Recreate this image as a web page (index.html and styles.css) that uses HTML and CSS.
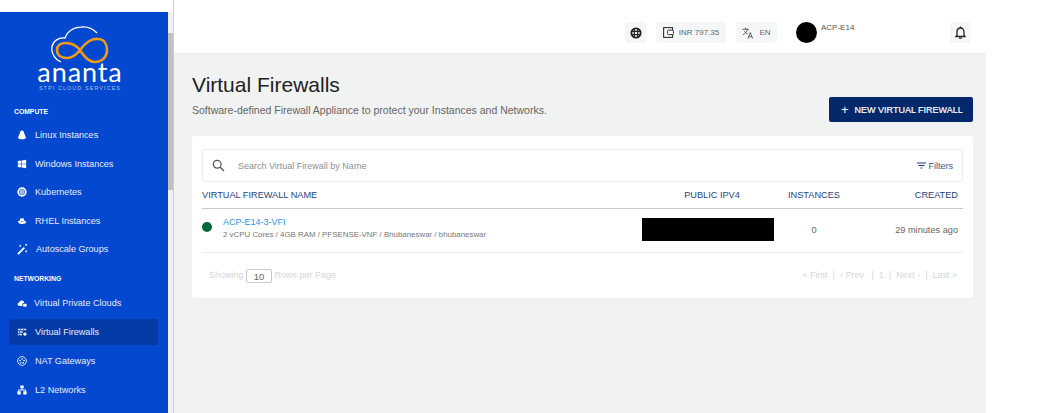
FILE: index.html
```html
<!DOCTYPE html>
<html>
<head>
    <title>Virtual Firewalls</title>
    <link rel="stylesheet" href="styles.css">
</head>
<body>
    <div class="app">
        <aside class="sidebar-wrap">
            <div class="sidebar">
                <div class="logo">
                    <svg class="logo-mark" width="60" height="38" viewBox="0 0 60 38">
                        <path d="M10 36 C3 33 0 26 1 21 C2 15 8 11 14 12 C17 4 24 1 30 1 C37 0 42 3 46 7" fill="none" stroke="#fff" stroke-width="1.3"/>
                        <path d="M29 24 C34 17 41 12 47 13 C53 13 56 18 56 24 C56 31 51 36 44 36 C37 36 32 29 29 24 C25 19 21 17 15 17 C9 17 6 20 6 24 C6 29 10 32 16 32 C22 32 26 28 29 24" fill="none" stroke="#f39a15" stroke-width="2.6"/>
                    </svg>
                    <div class="logo-name">ananta</div>
                    <div class="logo-tag">STPI CLOUD SERVICES</div>
                </div>
                <div class="nav-label">COMPUTE</div>
                <nav class="nav-group">
                    <a class="nav-item">
                        <svg class="nav-icon" viewBox="0 0 12 12"><path d="M6 0.5 C8 0.5 8.6 2.5 8.6 4 L11 9.5 L8 11 L4 11 L1 9.5 L3.4 4 C3.4 2.5 4 0.5 6 0.5Z" fill="#fff"/></svg>
                        Linux Instances
                    </a>
                    <a class="nav-item">
                        <svg class="nav-icon" viewBox="0 0 12 12"><path d="M1 2.5 L5.3 1.8 V5.6 H1Z M6 1.7 L11 1 V5.6 H6Z M1 6.3 H5.3 V10.2 L1 9.5Z M6 6.3 H11 V11 L6 10.3Z" fill="#fff"/></svg>
                        Windows Instances
                    </a>
                    <a class="nav-item">
                        <svg class="nav-icon" viewBox="0 0 12 12"><circle cx="6" cy="6" r="4.6" fill="none" stroke="#fff" stroke-width="2"/><circle cx="6" cy="6" r="3.2" fill="#9db6ee"/></svg>
                        Kubernetes
                    </a>
                    <a class="nav-item">
                        <svg class="nav-icon" viewBox="0 0 12 12"><path d="M3.5 5 C3.7 3 4.6 2.5 6 3 C7.6 2.5 8.3 3 8.6 5 L8.8 6 L3.2 6Z M1.2 6.2 L3 5.8 C4 7 8 7 9 5.8 L11 7 C11 9 8.5 9.8 6 9.6 C3 9.4 1 8 1.2 6.2Z" fill="#fff"/></svg>
                        RHEL Instances
                    </a>
                    <a class="nav-item nav-item-wide">
                        <svg class="nav-icon nav-icon-big" viewBox="0 0 12 12"><path d="M1 11 L8 4" stroke="#fff" stroke-width="2"/><path d="M9 1 L11 1 M10 0 L10 2 M2.5 2 L4.5 2 M3.5 1 L3.5 3 M10 7 L10 9 M9 8 L11 8" stroke="#fff" stroke-width="1"/></svg>
                        Autoscale Groups
                    </a>
                </nav>
                <div class="nav-label nav-label-net">NETWORKING</div>
                <nav class="nav-group nav-group-net">
                    <a class="nav-item nav-item-tight">
                        <svg class="nav-icon" viewBox="0 0 12 12"><path d="M3 9.5 C1 9.5 0.5 8 0.8 7 C1 6 2 5.5 2.6 5.6 C3 3.5 5 2.5 6.5 3 C8 3.5 8.6 4.6 8.6 5.8 L6.5 6.5 V9.5Z" fill="#fff"/><rect x="7.5" y="7" width="4" height="3.4" rx="0.5" fill="#fff"/></svg>
                        Virtual Private Clouds
                    </a>
                    <a class="nav-item active">
                        <svg class="nav-icon" viewBox="0 0 12 12"><path d="M1 2 H11 V4 H1Z M1 5 H7 V7 H1Z M1 8 H6 V10 H1Z" fill="#dce5f8"/><path d="M4 2 V4 M8 2 V4 M3 5 V7 M2.5 8 V10" stroke="#0a3ba6" stroke-width="0.7"/><circle cx="9.5" cy="8.5" r="2" fill="#fff"/></svg>
                        Virtual Firewalls
                    </a>
                    <a class="nav-item">
                        <svg class="nav-icon" viewBox="0 0 12 12"><circle cx="6" cy="6" r="5.2" fill="none" stroke="#fff" stroke-width="1"/><circle cx="6" cy="3.6" r="1" fill="#fff"/><circle cx="3.6" cy="5.4" r="1" fill="#fff"/><circle cx="8.4" cy="5.4" r="1" fill="#fff"/><circle cx="4.5" cy="8.2" r="1" fill="#fff"/><circle cx="7.5" cy="8.2" r="1" fill="#fff"/></svg>
                        NAT Gateways
                    </a>
                    <a class="nav-item">
                        <svg class="nav-icon" viewBox="0 0 12 12"><path d="M4 0.5 H8 V4 H6.5 V5.5 H10.5 V7.5 H11.5 V11.5 H7.5 V7.5 H9.5 V6.5 H2.5 V7.5 H4.5 V11.5 H0.5 V7.5 H1.5 V5.5 H5.5 V4 H4Z" fill="#fff"/></svg>
                        L2 Networks
                    </a>
                </nav>
            </div>
            <div class="scrollbar"><div class="scroll-thumb"></div></div>
        </aside>

        <div class="main">
            <header class="topbar">
                <div class="chip chip-icon">
                    <svg width="12" height="12" viewBox="0 0 13 13"><circle cx="6.5" cy="6.5" r="5" fill="none" stroke="#222" stroke-width="2"/><path d="M4.7 1 V12 M8.3 1 V12 M1 4.7 H12 M1 8.3 H12" stroke="#222" stroke-width="1.3"/></svg>
                </div>
                <div class="chip chip-wallet">
                    <svg width="11" height="11" viewBox="0 0 11 11"><rect x="0.6" y="0.6" width="9" height="9.8" fill="none" stroke="#333" stroke-width="1.1"/><rect x="4.6" y="3.2" width="5.8" height="4.4" rx="1" fill="#fff" stroke="#333" stroke-width="1"/></svg>
                    <span>INR 797.35</span>
                </div>
                <div class="chip chip-lang">
                    <svg width="12" height="12" viewBox="0 0 13 13"><path d="M0.5 2.5 H7.5 M4 0.5 V2.5 M6 2.5 C5 5.5 3 7.5 1 8.5 M2.5 4.5 C3.5 6 4.5 7 6 7.5" fill="none" stroke="#444" stroke-width="0.9"/><path d="M6.5 12.5 L9 6 L11.5 12.5 M7.4 10.5 H10.6" fill="none" stroke="#444" stroke-width="0.9"/></svg>
                    <span>EN</span>
                </div>
                <div class="user">
                    <div class="avatar"></div>
                    <div class="user-name">ACP-E14</div>
                </div>
                <div class="chip chip-bell">
                    <svg width="13" height="14" viewBox="0 0 13 14"><path d="M2 10.5 H11 L10 9 V6 C10 3.5 8.5 2 6.5 2 C4.5 2 3 3.5 3 6 V9Z" fill="none" stroke="#222" stroke-width="1.3"/><path d="M6.5 0.5 V2 M5 12.2 H8" stroke="#222" stroke-width="1.3"/></svg>
                </div>
            </header>

            <main class="content">
                <div class="page-head">
                    <div class="page-text">
                        <h1 class="page-title">Virtual Firewalls</h1>
                        <p class="page-sub">Software-defined Firewall Appliance to protect your Instances and Networks.</p>
                    </div>
                    <button class="btn-new"><span class="plus">+</span>NEW VIRTUAL FIREWALL</button>
                </div>

                <section class="card">
                    <div class="search">
                        <svg width="13" height="13" viewBox="0 0 13 13"><circle cx="5.2" cy="5.2" r="3.9" fill="none" stroke="#555" stroke-width="1.2"/><path d="M8.2 8.2 L12 12" stroke="#555" stroke-width="1.3"/></svg>
                        <span class="search-text">Search Virtual Firewall by Name</span>
                        <span class="filters">
                            <svg width="9" height="7" viewBox="0 0 9 7"><path d="M0 1 H9 M1.5 3.5 H7.5 M3.5 6 H5.5" stroke="#1d3b78" stroke-width="1"/></svg>
                            Filters
                        </span>
                    </div>

                    <div class="row row-head">
                        <div>VIRTUAL FIREWALL NAME</div>
                        <div class="cell-ip">PUBLIC IPV4</div>
                        <div class="cell-inst">INSTANCES</div>
                        <div class="cell-created">CREATED</div>
                    </div>

                    <div class="row row-body">
                        <div class="cell-name">
                            <span class="status"></span>
                            <div class="fw-text">
                                <div class="fw-name">ACP-E14-3-VFI</div>
                                <div class="fw-meta">2 vCPU Cores / 4GB RAM / PFSENSE-VNF / Bhubaneswar / bhubaneswar</div>
                            </div>
                        </div>
                        <div class="cell-ip"><div class="redacted"></div></div>
                        <div class="cell-inst">0</div>
                        <div class="cell-created">29 minutes ago</div>
                    </div>

                    <div class="pager">
                        <div class="pager-size">Showing <span class="size-box">10</span> Rows per Page</div>
                        <div class="pager-links">« First &nbsp;|&nbsp; ‹ Prev &nbsp; | &nbsp;1&nbsp; | &nbsp;Next › &nbsp;| &nbsp;Last »</div>
                    </div>
                </section>
            </main>
        </div>
    </div>
</body>
</html>
```

FILE: styles.css
```css
* {
    box-sizing: border-box;
}

html, body {
    height: 413px;
    overflow: hidden;
}

body {
    margin: 0;
    background: #fff;
    font-family: "Liberation Sans", Arial, sans-serif;
    color: #333;
}

.app {
    display: flex;
    width: 986px;
    height: 413px;
}

.sidebar-wrap {
    display: flex;
    flex: 0 0 174px;
    padding-top: 12px;
    border-right: 1px solid #c5cbea;
}

.sidebar {
    flex: 0 0 168px;
    padding: 14px 10px 0 9px;
    background: #0348cf;
    color: #fff;
    overflow: hidden;
}

.scrollbar {
    flex: 1;
    background: #f1f1f1;
}

.scroll-thumb {
    height: 157px;
    margin-top: 21px;
    background: #c1c1c1;
}

.logo {
    display: flex;
    flex-direction: column;
    align-items: center;
    height: 78px;
    margin-right: 7px;
}

.logo-mark {
    margin-left: 2px;
    flex: 0 0 38px;
}

.logo-name {
    margin-top: -3px;
    font-family: Lato, sans-serif;
    font-size: 27px;
    font-weight: 400;
    line-height: 21px;
    letter-spacing: 0.9px;
}

.logo-tag {
    margin-top: 3px;
    font-size: 5.5px;
    line-height: 7px;
    letter-spacing: 1.05px;
    color: #a9bff0;
}

.nav-label {
    margin-left: 5px;
    height: 14px;
    font-size: 6.8px;
    font-weight: bold;
    line-height: 16px;
}

.nav-label-net {
    margin-top: 9px;
}

.nav-group {
    display: flex;
    flex-direction: column;
    gap: 2.5px;
    margin-top: 4px;
}

.nav-group-net {
    gap: 3px;
    margin-top: 5px;
}

.nav-item {
    display: flex;
    align-items: center;
    gap: 8px;
    height: 26px;
    padding-left: 8px;
    border-radius: 3px;
    font-size: 9.1px;
    color: #e6ecfb;
}

.nav-item.active {
    background: #033aa6;
}

.nav-icon {
    flex: 0 0 10px;
    width: 10px;
    height: 10px;
}

.nav-icon-big {
    flex: 0 0 11px;
    width: 11px;
    height: 11px;
}

.nav-item-tight {
    gap: 7px;
}

.main {
    flex: 1;
    display: flex;
    flex-direction: column;
    min-width: 0;
}

.topbar {
    display: flex;
    align-items: center;
    flex: 0 0 54px;
    padding: 22px 15px 10px 451px;
    border-bottom: 1px solid #e8e9e9;
    background: #fff;
}

.chip {
    display: flex;
    align-items: center;
    justify-content: center;
    height: 21px;
    border-radius: 3px;
    background: #f5f6f7;
    font-size: 8px;
    color: #666;
}

.chip-icon {
    width: 21px;
}

.chip-wallet {
    width: 70px;
    gap: 5px;
    margin-left: 10px;
}

.chip-lang {
    width: 41px;
    gap: 5px;
    margin-left: 10px;
}

.user {
    display: flex;
    width: 154px;
    margin-left: 19px;
}

.avatar {
    width: 21px;
    height: 21px;
    border-radius: 50%;
    background: #000;
}

.user-name {
    margin: 1px 0 0 4px;
    font-size: 8px;
    line-height: 9px;
    color: #555;
}

.chip-bell {
    width: 21px;
}

.content {
    flex: 1;
    padding: 19px 13px 0 18px;
    background: #f1f2f2;
}

.page-head {
    display: flex;
    justify-content: space-between;
    align-items: flex-end;
    height: 49px;
}

.page-text {
    align-self: flex-start;
}

.page-title {
    margin: 0;
    font-size: 21px;
    font-weight: normal;
    line-height: 24px;
    color: #222;
}

.page-sub {
    margin: 6px 0 0;
    font-size: 10.5px;
    line-height: 14px;
    color: #666;
}

.btn-new {
    display: flex;
    align-items: center;
    width: 144px;
    height: 25px;
    padding: 0 0 0 12px;
    border: 0;
    border-radius: 2px;
    background: #04296b;
    color: #fff;
    font-family: inherit;
    font-size: 9px;
    font-weight: normal;
    white-space: nowrap;
    -webkit-text-stroke: 0.2px #fff;
}

.plus {
    margin-right: 6px;
    font-size: 13px;
    line-height: 13px;
    -webkit-text-stroke: 0;
}

.card {
    height: 162px;
    margin-top: 14px;
    padding: 13px 10px 0;
    border-radius: 3px;
    background: #fff;
}

.search {
    display: flex;
    align-items: center;
    height: 33px;
    padding: 0 9px;
    border: 1px solid #eceded;
    border-radius: 2px;
    font-size: 9px;
}

.search-text {
    flex: 1;
    margin-left: 13px;
    color: #8b8f94;
}

.filters {
    display: flex;
    align-items: center;
    gap: 3px;
    color: #3e5688;
}

.row {
    display: grid;
    grid-template-columns: 440px 132px 80px 1fr;
    align-items: center;
}

.row-head {
    height: 27px;
    border-bottom: 1px solid #c8c9c9;
    font-size: 9.2px;
    color: #27457f;
}

.row-body {
    height: 44px;
    border-bottom: 1px solid #eceded;
    font-size: 9.2px;
    color: #666;
}

.cell-ip {
    text-align: center;
}

.row-head .cell-ip {
    padding-left: 8px;
}

.cell-inst {
    text-align: center;
}

.cell-created {
    padding-right: 5px;
    text-align: right;
}

.row-body .cell-inst,
.row-body .cell-created {
    margin-bottom: 2px;
}

.cell-name {
    display: flex;
    align-items: center;
    gap: 11px;
}

.status {
    flex: 0 0 10px;
    height: 10px;
    margin-top: -8px;
    border-radius: 50%;
    background: #03693a;
}

.fw-text {
    margin-top: -5px;
}

.fw-name {
    font-size: 9px;
    line-height: 13px;
    color: #2a96e8;
}

.fw-meta {
    font-size: 7.9px;
    line-height: 11px;
    color: #777;
}

.redacted {
    width: 132px;
    height: 23px;
    margin-bottom: 3px;
    background: #000;
}

.pager {
    display: flex;
    justify-content: space-between;
    align-items: center;
    height: 44px;
    padding: 0 6px 0 7px;
    font-size: 9px;
    color: #d4d6d8;
}

.pager-size {
    margin-top: 1px;
}

.size-box {
    display: inline-block;
    width: 26px;
    height: 14px;
    border: 1px solid #c5c7c9;
    border-radius: 2px;
    font-size: 9.5px;
    text-align: center;
    line-height: 13px;
    color: #666;
    vertical-align: middle;
}
```
